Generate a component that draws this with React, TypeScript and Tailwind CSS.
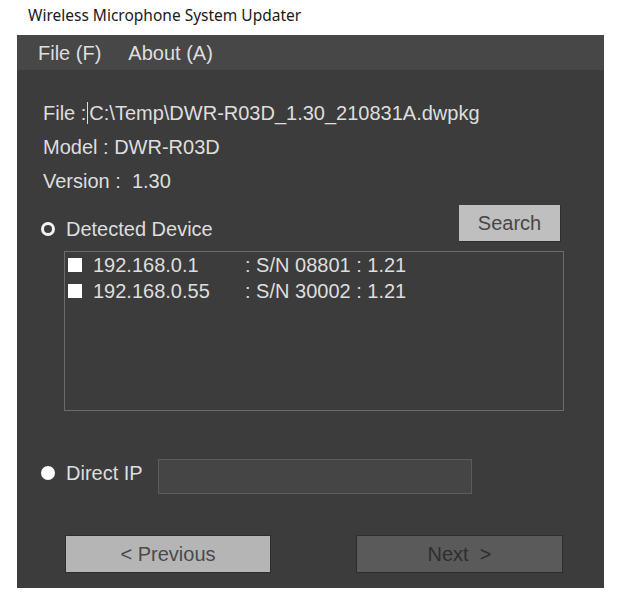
const devices = [
  { ip: "192.168.0.1", info: ": S/N 08801 : 1.21" },
  { ip: "192.168.0.55", info: ": S/N 30002 : 1.21" },
];

const App = () => {
  return (
    <div className="w-[622px] h-[604px] bg-white font-['Liberation_Sans',Arial,sans-serif]">
      <div className="h-[35px] pl-[28px] pt-[4px] leading-[22px] text-[15.5px] text-[#1a1a1a] font-['Noto_Sans',sans-serif]">
        Wireless Microphone System Updater
      </div>

      <div className="ml-[17px] w-[587px] h-[553px] bg-[#3c3c3c] text-[20px] text-[#dedede] flex flex-col">
        {/* menu bar */}
        <div className="h-[35px] bg-[#474747] flex items-center pl-[21px] gap-[27px]">
          <span>File (F)</span>
          <span>About (A)</span>
        </div>

        {/* package info */}
        <div className="pt-[26px] pl-[26px] leading-[34px]">
          <div className="flex items-center">
            <span>File :</span>
            <span className="w-px h-[22px] bg-[#dedede] mx-[1px]" />
            <span>C:\Temp\DWR-R03D_1.30_210831A.dwpkg</span>
          </div>
          <div>Model : DWR-R03D</div>
          <div>Version :&nbsp; 1.30</div>
        </div>

        {/* detected device */}
        <div className="mt-[7px] h-[37px] flex justify-between pl-[24px] pr-[43px]">
          <div className="self-end h-[26px] flex items-center gap-[11px]">
            <span className="w-[14px] h-[14px] rounded-full border-[3px] border-[#f2f2f2]" />
            <span>Detected Device</span>
          </div>
          <button className="w-[102px] h-[37px] bg-[#bfbfbf] text-[#474747] border-b border-r border-[#2e2e2e]">
            Search
          </button>
        </div>

        <div className="mt-[9px] ml-[47px] w-[500px] h-[160px] border border-[#6b6b6b] pl-[3px]">
          {devices.map((d) => (
            <div key={d.ip} className="h-[26px] flex items-center">
              <span className="w-[14px] h-[14px] bg-white" />
              <span className="ml-[11px] w-[152px]">{d.ip}</span>
              <span>{d.info}</span>
            </div>
          ))}
        </div>

        {/* direct ip */}
        <div className="mt-[48px] h-[35px] flex pl-[24px]">
          <div className="h-[28px] w-[117px] flex items-center gap-[11px]">
            <span className="w-[14px] h-[14px] rounded-full bg-white" />
            <span>Direct IP</span>
          </div>
          <div className="w-[314px] h-[35px] bg-[#454545] border border-[#5c5c5c]" />
        </div>

        {/* navigation */}
        <div className="mt-[41px] flex pl-[48px] gap-[85px]">
          <button className="w-[206px] h-[38px] bg-[#b5b5b5] text-[#4a4a4a] border border-[#2e2e2e]">
            &lt; Previous
          </button>
          <button className="w-[207px] h-[38px] bg-[#5a5a5a] text-[#2e2e2e] border border-[#2e2e2e]">
            Next &nbsp;&gt;
          </button>
        </div>
      </div>
    </div>
  );
};

export default App;
